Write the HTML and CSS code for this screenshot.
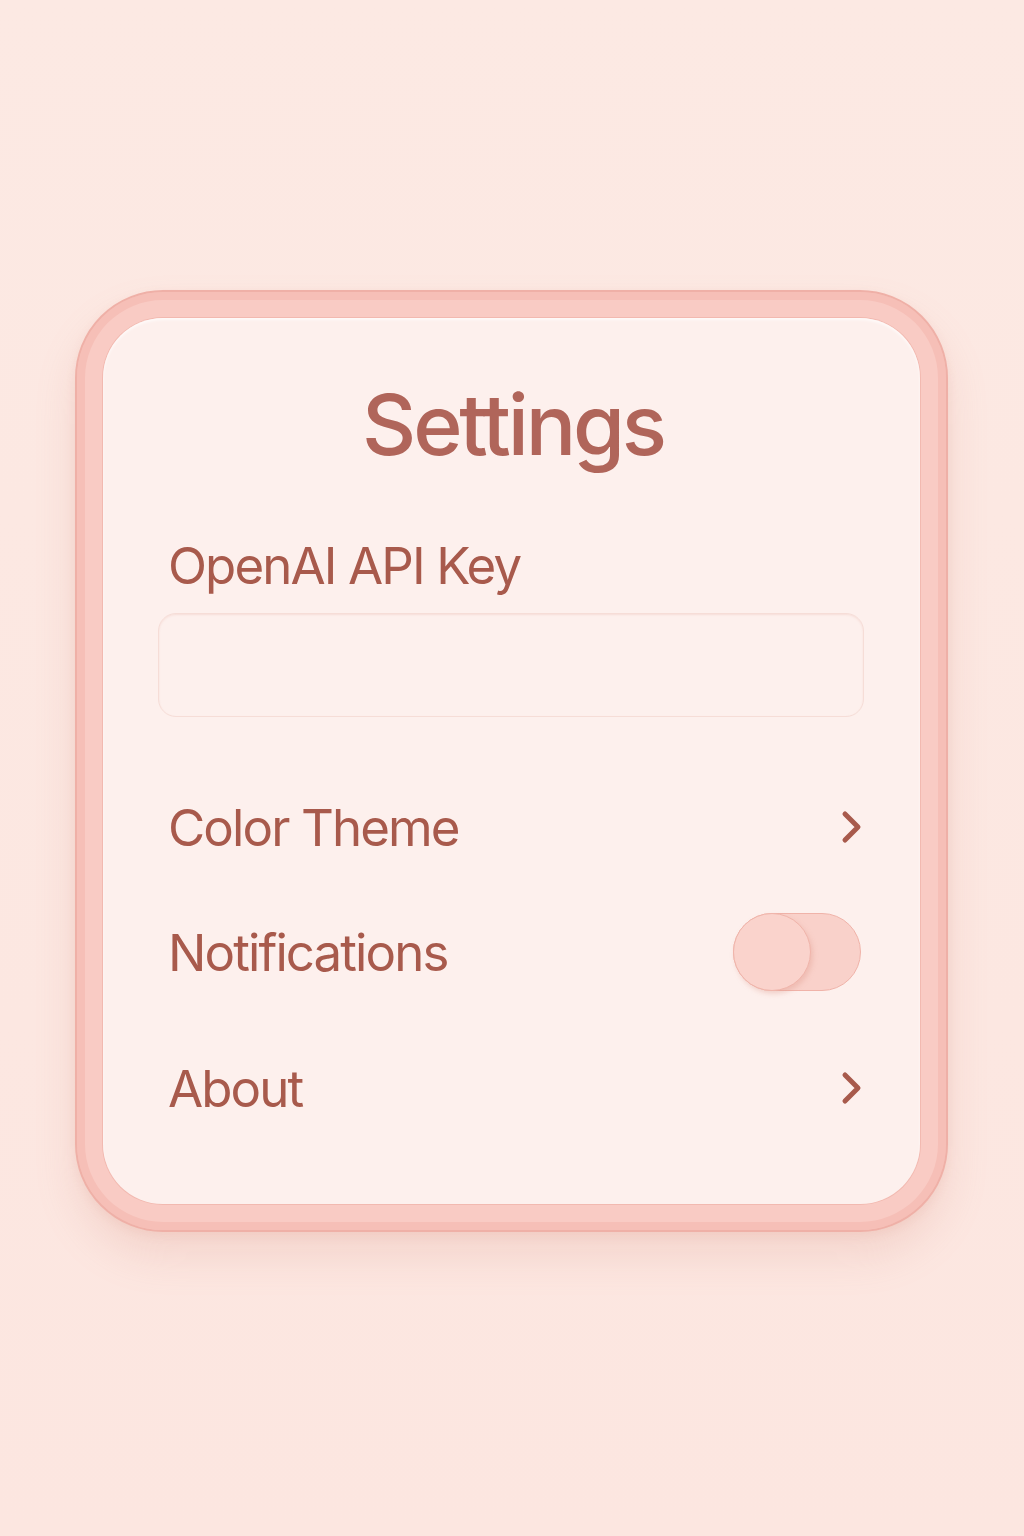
FILE: index.html
```html
<!DOCTYPE html>
<html lang="en">
<head>
<meta charset="utf-8">
<title>Settings</title>
<link rel="stylesheet" href="styles.css">
</head>
<body>
<main class="page">
  <section class="frame">
    <div class="card">
      <h1 class="title">Settings</h1>
      <label class="field-label" for="key">OpenAI API Key</label>
      <input class="field-input" id="key" type="text">
      <div class="row row-theme">
        <span class="row-label">Color Theme</span>
        <svg class="chev" width="24" height="34" viewBox="0 0 24 34"><polyline points="5,4 18,17 5,30" fill="none" stroke="#a85a4c" stroke-width="5" stroke-linecap="round" stroke-linejoin="round"/></svg>
      </div>
      <div class="row row-notif">
        <span class="row-label">Notifications</span>
        <span class="toggle"><span class="knob"></span></span>
      </div>
      <div class="row row-about">
        <span class="row-label">About</span>
        <svg class="chev" width="24" height="34" viewBox="0 0 24 34"><polyline points="5,4 18,17 5,30" fill="none" stroke="#a85a4c" stroke-width="5" stroke-linecap="round" stroke-linejoin="round"/></svg>
      </div>
    </div>
  </section>
</main>
</body>
</html>
```

FILE: styles.css
```css
html, body {
  margin: 0;
  padding: 0;
}
body {
  width: 1024px;
  height: 1536px;
  background: linear-gradient(180deg, #fce9e3 0%, #fce6e0 100%);
  font-family: Inter, "Noto Sans", sans-serif;
  color: #a85a4c;
  overflow: hidden;
}
.page {
  display: flex;
  justify-content: flex-start;
  padding: 290px 0 0 75px;
}
.frame {
  width: 873px;
  height: 942px;
  box-sizing: border-box;
  padding: 26px;
  border: 2px solid #efb0a7;
  border-radius: 88px;
  background: #f9cbc4;
  box-shadow: inset 0 0 0 8px #f6bfb7, 0 24px 40px rgba(214, 140, 125, 0.2), 0 4px 10px rgba(214, 140, 125, 0.12);
}
.card {
  height: 100%;
  box-sizing: border-box;
  border-radius: 60px;
  background: #fdf0ed;
  box-shadow: 0 0 0 1px #f2b9b0, inset 0 2px 3px rgba(255, 255, 255, 0.7);
  padding: 65px 56px 0 55px;
  display: flex;
  flex-direction: column;
}
.title {
  margin: 0;
  font-size: 84px;
  line-height: 1;
  font-weight: 500;
  text-align: center;
  color: #b0655a;
  padding-left: 4px;
  letter-spacing: -3.2px;
}
.field-label {
  margin: 73px 0 0 10px;
  font-size: 51px;
  line-height: 1;
  font-weight: 400;
  letter-spacing: -1.9px;
  display: block;
}
.field-input {
  margin-top: 22px;
  height: 104px;
  box-sizing: border-box;
  width: 100%;
  border: 1px solid #f6ddd7;
  border-radius: 18px;
  background: #fdf0ed;
  box-shadow: inset 0 1px 2px rgba(230, 170, 160, 0.25);
  outline: none;
}
.row {
  display: flex;
  align-items: center;
  justify-content: space-between;
  padding: 0 4px 0 10px;
}
.row-label {
  font-size: 51px;
  line-height: 1;
  font-weight: 400;
  letter-spacing: -1.9px;
}
.row-theme {
  margin-top: 84px;
  height: 52px;
}
.row-notif {
  margin-top: 60px;
  height: 78px;
  padding-right: 3px;
}
.row-about {
  margin-top: 71px;
  height: 52px;
}
.chev {
  display: block;
  margin-right: -4px;
}
.toggle {
  position: relative;
  width: 128px;
  height: 78px;
  box-sizing: border-box;
  border-radius: 39px;
  background: #f9d1ca;
  border: 1px solid #f0b3a9;
}
.knob {
  position: absolute;
  left: -1px;
  top: -1px;
  width: 78px;
  height: 78px;
  box-sizing: border-box;
  border-radius: 50%;
  background: #fad3cc;
  border: 1px solid #f0b5ab;
  box-shadow: 2px 3px 5px rgba(220, 150, 135, 0.35);
}
```
